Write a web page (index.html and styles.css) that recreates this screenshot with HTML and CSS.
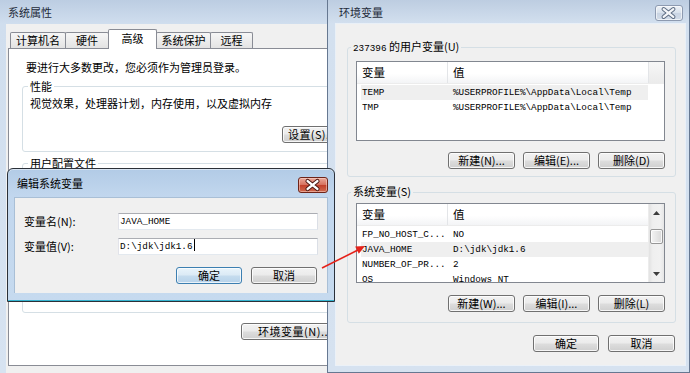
FILE: index.html
```html
<!DOCTYPE html>
<html lang="zh-CN">
<head>
<meta charset="utf-8">
<title>环境变量</title>
<link rel="stylesheet" href="styles.css">
</head>
<body>
<div class="desk">

  <section class="win sys">
    <div class="titlebar">系统属性</div>
    <div class="client">
      <div class="tabs">
        <div class="tab t1">计算机名</div>
        <div class="tab t2">硬件</div>
        <div class="tab t3 active">高级</div>
        <div class="tab t4">系统保护</div>
        <div class="tab t5">远程</div>
      </div>
      <div class="panel">
        <p class="intro">要进行大多数更改，您必须作为管理员登录。</p>
        <div class="gb gb-perf">
          <div class="gb-label">性能</div>
          <p class="gb-text">视觉效果，处理器计划，内存使用，以及虚拟内存</p>
          <div class="gb-actions"><button class="btn btn-settings">设置(S)...</button></div>
        </div>
        <div class="gb gb-profile">
          <div class="gb-label">用户配置文件</div>
        </div>
        <div class="panel-actions"><button class="btn btn-envvars">环境变量(N)...</button></div>
      </div>
    </div>
  </section>

  <section class="win env">
    <div class="titlebar">环境变量</div>
    <div class="close close-inactive">
      <svg width="28" height="16" viewBox="0 0 28 16"><path d="M9 4 L19 12 M19 4 L9 12" stroke="#5d6c82" stroke-width="4.4" stroke-linecap="round"/><path d="M9 4 L19 12 M19 4 L9 12" stroke="#f4f6f9" stroke-width="2.4" stroke-linecap="round"/></svg>
    </div>
    <div class="client">
      <div class="gb gb-user">
        <div class="gb-label"><span class="num">237396</span> 的用户变量(U)</div>
        <div class="lv">
          <div class="lv-main">
            <div class="lv-head"><span class="c1">变量</span><span class="c2">值</span><span class="filler"></span></div>
            <div class="lv-rows">
              <div class="row sel"><span class="c1">TEMP</span><span class="c2">%USERPROFILE%\AppData\Local\Temp</span></div>
              <div class="row"><span class="c1">TMP</span><span class="c2">%USERPROFILE%\AppData\Local\Temp</span></div>
            </div>
          </div>
        </div>
        <div class="btn-row">
          <button class="btn w67">新建(N)...</button>
          <button class="btn w67">编辑(E)...</button>
          <button class="btn w67">删除(D)</button>
        </div>
      </div>

      <div class="gb gb-system">
        <div class="gb-label">系统变量(S)</div>
        <div class="lv">
          <div class="lv-main">
            <div class="lv-head"><span class="c1">变量</span><span class="c2">值</span></div>
            <div class="lv-rows">
              <div class="row"><span class="c1">FP_NO_HOST_C...</span><span class="c2">NO</span></div>
              <div class="row sel"><span class="c1">JAVA_HOME</span><span class="c2">D:\jdk\jdk1.6</span></div>
              <div class="row"><span class="c1">NUMBER_OF_PR...</span><span class="c2">2</span></div>
              <div class="row"><span class="c1">OS</span><span class="c2">Windows_NT</span></div>
            </div>
          </div>
          <div class="vscroll">
            <div class="sb-btn"><svg width="7" height="4" viewBox="0 0 7 4"><path d="M0 4 L3.5 0 L7 4 Z" fill="#3d3d3d"/></svg></div>
            <div class="sb-track"><div class="sb-thumb"></div></div>
            <div class="sb-btn"><svg width="7" height="4" viewBox="0 0 7 4"><path d="M0 0 L7 0 L3.5 4 Z" fill="#3d3d3d"/></svg></div>
          </div>
        </div>
        <div class="btn-row">
          <button class="btn w67">新建(W)...</button>
          <button class="btn w67">编辑(I)...</button>
          <button class="btn w67">删除(L)</button>
        </div>
      </div>

      <div class="dlg-actions">
        <button class="btn w66">确定</button>
        <button class="btn w67">取消</button>
      </div>
    </div>
  </section>

  <section class="win edit">
    <div class="titlebar">编辑系统变量</div>
    <div class="close close-active">
      <svg width="30" height="16" viewBox="0 0 30 16"><path d="M10 4 L20 12 M20 4 L10 12" stroke="#4a1712" stroke-width="4.6" stroke-linecap="round"/><path d="M10 4 L20 12 M20 4 L10 12" stroke="#ffffff" stroke-width="2.6" stroke-linecap="round"/></svg>
    </div>
    <div class="client">
      <div class="frow">
        <label class="flabel">变量名(N):</label>
        <div class="field">JAVA_HOME</div>
      </div>
      <div class="frow second">
        <label class="flabel">变量值(V):</label>
        <div class="field">D:\jdk\jdk1.6<span class="caret"></span></div>
      </div>
      <div class="edit-actions">
        <button class="btn default w66">确定</button>
        <button class="btn w66">取消</button>
      </div>
    </div>
  </section>

  <svg class="arrow" width="690" height="373" viewBox="0 0 690 373">
    <line x1="322" y1="268" x2="358" y2="250" stroke="#e5231b" stroke-width="1.6"/>
    <path d="M365 246 L358.8 253.7 L355.2 246.5 Z" fill="#e5231b"/>
  </svg>
</div>
</body>
</html>
```
FILE: styles.css
```css
* { box-sizing: border-box; }
html, body { margin: 0; padding: 0; }
body {
  width: 690px;
  height: 373px;
  overflow: hidden;
  background: #cbdaeb;
  font-family: "Noto Sans CJK SC", "Noto Sans", sans-serif;
  font-size: 11px;
  color: #000;
}
p { margin: 0; }
button { font: inherit; margin: 0; padding: 0; appearance: none; -webkit-appearance: none; }

.desk { position: relative; width: 690px; height: 373px; }

.win { position: absolute; overflow: hidden; }
.titlebar { height: 24px; line-height: 24px; color: #1e2b3a; white-space: nowrap; }

/* ---------- buttons ---------- */
.btn {
  display: flex;
  align-items: center;
  justify-content: center;
  height: 17px;
  border: 1px solid #707070;
  border-radius: 3px;
  background: linear-gradient(#f2f2f2 0%, #ebebeb 48%, #dddddd 52%, #cfcfcf 100%);
  box-shadow: inset 0 0 0 1px rgba(255,255,255,0.8);
  line-height: 15px;
  color: #000;
  white-space: nowrap;
}
.btn.default {
  border-color: #3c7fb1;
  background: linear-gradient(#e9f4fb 0%, #dbeaf5 48%, #c6dcee 52%, #b6d2ea 100%);
  box-shadow: inset 0 0 0 1px rgba(255,255,255,0.7);
}
.w66 { width: 66px; }
.w67 { width: 67px; }
.btn-settings { width: 75px; justify-content: flex-start; padding-left: 5px; letter-spacing: 0.4px; }
.btn-envvars { width: 100px; justify-content: flex-start; padding-left: 16px; letter-spacing: 0.5px; }

/* ---------- group boxes ---------- */
.gb { border: 1px solid #d5dfe5; border-radius: 3px; }
.gb-label {
  width: max-content;
  margin: -8px 0 0 3px;
  padding: 0 2px;
  line-height: 13px;
  background: #f0f0f0;
  white-space: nowrap;
}

/* ---------- System properties (back window) ---------- */
.sys {
  left: 0; top: 0;
  width: 328px; height: 373px;
  background: linear-gradient(#bccde2 0, #d0deee 24px, #d7e3f1 100%);
}
.sys .titlebar { padding-left: 8px; }
.sys .client {
  margin-left: 6px;
  height: 349px;
  padding-left: 2px;
  background: #f0f0f0;
  overflow: hidden;
}
.tabs {
  position: relative;
  z-index: 1;
  display: flex;
  align-items: flex-end;
  height: 24px;
  padding-left: 2px;
}
.tab {
  height: 16px;
  margin-right: -1px;
  border: 1px solid #898c95;
  border-bottom: none;
  border-radius: 2px 2px 0 0;
  background: linear-gradient(#f6f6f6, #e3e3e3);
  text-align: center;
  line-height: 15px;
  white-space: nowrap;
}
.tab.active {
  height: 20px;
  margin-bottom: -1px;
  background: #fff;
  line-height: 17px;
}
.t1 { width: 56px; }
.t2 { width: 44px; }
.t3 { width: 49px; }
.t4 { width: 55px; }
.t5 { width: 43px; }

.panel {
  width: 390px;
  height: 318px;
  padding: 12px 0 0 13px;
  background: #fff;
  border: 1px solid #898c95;
}
.intro { margin-left: 4px; line-height: 13px; white-space: nowrap; }
.panel .gb-label { background: #fff; margin: -7px 0 0 5px; }
.gb-perf { width: 344px; height: 66px; margin-top: 12px; }
.gb-text { margin: 4px 0 0 7px; line-height: 13px; white-space: nowrap; }
.gb-actions { display: flex; justify-content: flex-end; margin: 16px 8px 0 0; }
.gb-profile { width: 344px; height: 150px; margin-top: 11px; }
.panel-actions { display: flex; margin: 10px 0 0 219px; }

/* ---------- Environment variables window ---------- */
.env {
  left: 327px; top: 0;
  width: 363px; height: 373px;
  border: 1px solid #667891;
  border-top: none;
  background: linear-gradient(#bdcde1 0, #d3e0ef 24px, #d6e2f0 100%);
}
.env .titlebar { padding-left: 11px; }
.env .client {
  margin: 0 4px 0 8px;
  height: 341px;
  padding: 23px 9px 0 11px;
  background: #f0f0f0;
  box-shadow: 0 0 0 1px rgba(255,255,255,0.5);
}
.close {
  position: absolute;
  display: flex;
  border-radius: 3px;
}
.close-inactive {
  left: 327px; top: 5px;
  width: 28px; height: 16px;
  border: 1px solid #8d9ab0;
  background: linear-gradient(#eef2f7, #d8e1ec 50%, #c9d4e3 51%, #d3dce8);
  box-shadow: inset 0 0 0 1px rgba(255,255,255,0.6);
}
.close-inactive svg { margin: -1px 0 0 -1px; }
.gb-user { height: 130px; }
.gb-system { height: 131px; margin-top: 15px; }
.gb-user .lv { margin: 6px 0 0 8px; }
.gb-system .lv { margin: 5px 0 0 8px; }

.lv {
  display: flex;
  width: 309px;
  height: 80px;
  border: 1px solid #828790;
  background: #fff;
  overflow: hidden;
}
.lv-main { flex: 1; min-width: 0; }
.lv-head {
  display: flex;
  height: 22px;
  line-height: 21px;
  font-size: 11.5px;
  background: linear-gradient(#ffffff 0, #ffffff 55%, #f3f4f6 100%);
  border-bottom: 1px solid #ececec;
}
.lv-head .c1 { width: 91px; padding-left: 5px; border-right: 1px solid #e3e5e8; }
.lv-head .c2 { flex: 1; padding-left: 5px; }
.lv-head .filler {
  width: 16px;
  background: linear-gradient(#f7f7f7, #ebebeb);
  border-left: 1px solid #e3e5e8;
}
.lv-rows { padding-top: 1px; }
.row {
  display: flex;
  width: 287px;
  height: 15px;
  margin-left: 4px;
  line-height: 15px;
  font-family: "Liberation Mono", monospace;
  font-size: 9.3px;
  white-space: nowrap;
}
.row.sel { background: #efefef; }
.row .c1 { width: 91px; padding-left: 1px; }
.row .c2 { padding-left: 1px; }

.vscroll {
  display: flex;
  flex-direction: column;
  width: 16px;
  background: linear-gradient(90deg, #e2e2e2, #efefef 25%, #f1f1f1 75%, #e6e6e6);
  border-left: 1px solid #ececec;
}
.sb-btn {
  height: 17px;
  display: flex;
  align-items: center;
  justify-content: center;
}
.sb-track { flex: 1; padding: 8px 0 0 1px; }
.sb-thumb {
  width: 13px;
  height: 15px;
  border: 1px solid #979797;
  border-radius: 2px;
  background: linear-gradient(90deg, #f4f4f4, #e6e6e6 50%, #d9d9d9);
  box-shadow: inset 0 0 0 1px rgba(255,255,255,0.8);
}
.btn-row {
  display: flex;
  justify-content: flex-end;
  gap: 8px;
  padding-right: 10px;
}
.gb-user .btn-row { margin-top: 11px; }
.gb-system .btn-row { margin-top: 12px; }
.dlg-actions {
  display: flex;
  justify-content: flex-end;
  gap: 9px;
  margin: 12px 1px 0 0;
}
.num { font-family: "Liberation Mono", monospace; font-size: 9.3px; }

/* ---------- Edit dialog (front) ---------- */
.edit {
  left: 7px; top: 168px;
  width: 328px; height: 134px;
  border: 1px solid #2b3038;
  border-radius: 6px 6px 0 0;
  background: linear-gradient(#b2cbe6 0, #c2d7ee 28px, #c6daef 100%);
  box-shadow: inset 0 -1px 0 #35b4d0, inset 0 1px 0 rgba(255,255,255,0.5);
}
.edit .titlebar { height: 28px; line-height: 28px; padding-left: 9px; color: #000; }
.close-active {
  left: 290px; top: 8px;
  width: 30px; height: 16px;
  border: 1px solid #6e2419;
  background: linear-gradient(#eaa99b, #d7725f 48%, #c2402b 52%, #cf6a4f);
  box-shadow: inset 0 0 0 1px rgba(255,220,210,0.5);
}
.close-active svg { margin: -1px 0 0 -1px; }
.edit .client {
  margin: 0 6px;
  height: 96px;
  padding: 15px 9px 0 10px;
  background: #f0f0f0;
  border: 1px solid #a9bfd6;
  border-bottom: none;
}
.frow { display: flex; align-items: center; height: 17px; margin-left: -1px; }
.frow.second { margin-top: 8px; }
.flabel { width: 94px; line-height: 13px; white-space: nowrap; }
.field {
  flex: 1;
  height: 17px;
  padding-left: 1px;
  border: 1px solid;
  border-color: #abadb3 #dbdfe6 #e3e9ef #e2e3ea;
  background: #fff;
  font-family: "Liberation Mono", monospace;
  font-size: 9.3px;
  line-height: 15px;
  white-space: nowrap;
}
.caret {
  display: inline-block;
  width: 1px;
  height: 12px;
  margin-left: 1px;
  vertical-align: -2px;
  background: #000;
}
.edit-actions {
  display: flex;
  justify-content: flex-end;
  gap: 9px;
  margin: 12px 1px 0 0;
}

/* ---------- annotation arrow ---------- */
.arrow { position: absolute; left: 0; top: 0; pointer-events: none; }
```
